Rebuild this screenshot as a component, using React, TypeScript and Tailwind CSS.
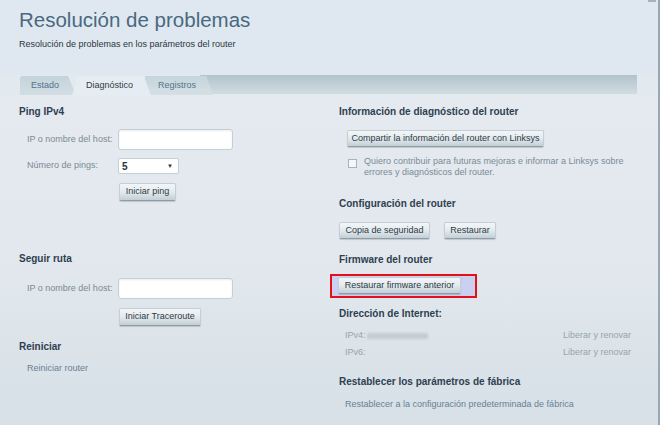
import React from "react";

const font = { fontFamily: '"Liberation Sans", Arial, sans-serif' };

function Btn({ children, className = "" }: { children: React.ReactNode; className?: string }) {
  return (
    <div
      className={
        "flex items-center justify-center rounded-[2px] border border-[#c4ced4] border-b-[#8d9ca6] bg-gradient-to-b from-[#f3f6f8] via-[#e3eaee] to-[#c3cfd6] text-[9px] text-[#2e3a44] shadow-[0_1px_1px_rgba(0,0,0,0.15)] " +
        className
      }
    >
      {children}
    </div>
  );
}

function SectionTitle({ children }: { children: React.ReactNode }) {
  return <div className="h-[14px] text-[10px] leading-[14px] font-bold text-[#2f3f50]">{children}</div>;
}

function Input({ className = "" }: { className?: string }) {
  return (
    <div
      className={
        "rounded-[3px] border border-[#c3ced6] bg-white shadow-[inset_0_1px_2px_rgba(0,0,0,0.08)] " + className
      }
    />
  );
}

export default function App() {
  return (
    <div style={font} className="relative h-[425px] w-[660px] overflow-hidden bg-[#e3e9ef]">
      {/* right border line */}
      <div className="absolute right-0 top-0 h-full w-[2px] bg-[#9aa6b0]" />
      <div className="absolute right-[4px] top-0 h-[2px] w-[8px] bg-[#a8b2ba]" />

      {/* header */}
      <div className="h-[75px] w-[658px] bg-[#dfe8f0] pl-[19px] pt-[7px]">
        <div className="text-[20.5px] leading-[26px] text-[#4a687f]">Resolución de problemas</div>
        <div className="mt-[5px] text-[9px] leading-[12px] text-[#2c3640]">
          Resolución de problemas en los parámetros del router
        </div>
      </div>

      {/* tab bar */}
      <div className="relative flex h-[20px] w-[658px] bg-[#e2e9ef]">
        <div className="absolute left-[200px] top-0 h-[19px] w-[437px] bg-gradient-to-b from-[#b1c3cb] to-[#d1dde2]" />
        <div className="absolute left-[20px] top-[1px] flex h-[19px] w-[56px] items-center rounded-tl-[3px] bg-gradient-to-b from-[#c4d3db] to-[#d2dee4] pl-[11px] text-[9px] text-[#55748b] [clip-path:polygon(0_0,86%_0,100%_100%,0_100%)]">
          Estado
        </div>
        <div className="absolute left-[145px] top-[1px] flex h-[19px] w-[68px] items-center bg-gradient-to-b from-[#c6d5dc] to-[#d4e0e5] pl-[13px] text-[9px] text-[#55748b] [clip-path:polygon(0_0,90%_0,100%_100%,0_100%)]">
          Registros
        </div>
        <div className="absolute left-[72px] top-[1px] flex h-[20px] w-[79px] items-center bg-[#e6edf2] pl-[14px] text-[9px] text-[#333b44] [clip-path:polygon(7%_0,91%_0,100%_100%,0_100%)]">
          Diagnóstico
        </div>
      </div>

      {/* content */}
      <div className="flex h-[330px] w-[658px] bg-gradient-to-b from-[#e4eaf0] via-[#e2e8ee] to-[#d6e0e6]">
        {/* left column */}
        <div className="w-[320px] pl-[19px] pt-[10px]">
          <SectionTitle>Ping IPv4</SectionTitle>
          <div className="mt-[10px] flex h-[21px] items-center pl-[8px]">
            <div className="w-[91px] text-[9px] text-[#7c8995]">IP o nombre del host:</div>
            <Input className="h-[21px] w-[115px]" />
          </div>
          <div className="mt-[8px] flex h-[16px] items-center pl-[8px]">
            <div className="w-[91px] text-[9px] text-[#7c8995]">Número de pings:</div>
            <div className="flex h-[16px] w-[61px] items-center justify-between rounded-[2px] border border-[#c3ced6] bg-white pl-[3px] pr-[5px]">
              <span className="text-[10px] font-bold text-[#2a323a]">5</span>
              <span className="text-[6px] text-[#333]">▼</span>
            </div>
          </div>
          <div className="mt-[9px] pl-[100px]">
            <Btn className="h-[18px] w-[57px]">Iniciar ping</Btn>
          </div>

          <div className="mt-[51px]">
            <SectionTitle>Seguir ruta</SectionTitle>
          </div>
          <div className="mt-[12px] flex h-[21px] items-center pl-[8px]">
            <div className="w-[91px] text-[9px] text-[#7c8995]">IP o nombre del host:</div>
            <Input className="h-[21px] w-[115px]" />
          </div>
          <div className="mt-[9px] pl-[100px]">
            <Btn className="h-[18px] w-[82px]">Iniciar Traceroute</Btn>
          </div>

          <div className="mt-[14px]">
            <SectionTitle>Reiniciar</SectionTitle>
          </div>
          <div className="mt-[8px] pl-[8px] text-[9px] leading-[12px] text-[#6a8094]">Reiniciar router</div>
        </div>

        {/* right column */}
        <div className="w-[319px] pl-[19px] pt-[10px]">
          <SectionTitle>Información de diagnóstico del router</SectionTitle>
          <div className="mt-[11px] pl-[8px]">
            <Btn className="h-[17px] w-[197px]">Compartir la información del router con Linksys</Btn>
          </div>
          <div className="mt-[9px] flex pl-[9px]">
            <div className="mt-[3px] h-[9px] w-[9px] shrink-0 border border-[#a8b4bc] bg-[#f4f7f9]" />
            <div className="ml-[7px] w-[260px] text-[9px] leading-[11px] text-[#7c8995]">
              Quiero contribuir para futuras mejoras e informar a Linksys sobre errores y diagnósticos del router.
            </div>
          </div>

          <div className="mt-[19px]">
            <SectionTitle>Configuración del router</SectionTitle>
          </div>
          <div className="mt-[11px] flex gap-[14px]">
            <Btn className="h-[17px] w-[91px]">Copia de seguridad</Btn>
            <Btn className="h-[17px] w-[52px]">Restaurar</Btn>
          </div>

          <div className="mt-[14px]">
            <SectionTitle>Firmware del router</SectionTitle>
          </div>
          <div className="ml-[-9px] mt-[7px] h-[24px] w-[147px] border-2 border-[#e3111a] bg-[#c9d0f0] pl-[6px] pt-[1px]">
            <Btn className="h-[17px] w-[123px]">Restaurar firmware anterior</Btn>
          </div>

          <div className="mt-[9px]">
            <SectionTitle>Dirección de Internet:</SectionTitle>
          </div>
          <div className="mt-[9px] flex h-[12px] items-center justify-between pl-[6px] pr-[8px] text-[9px] text-[#98a3ad]">
            <div className="flex items-center">
              <span>IPv4:</span>
              <span className="ml-[1px] h-[6px] w-[61px] rounded-[2px] bg-[#c4ccd4] blur-[1px]" />
            </div>
            <span>Liberar y renovar</span>
          </div>
          <div className="mt-[5px] flex h-[12px] items-center justify-between pl-[6px] pr-[8px] text-[9px] text-[#98a3ad]">
            <span>IPv6:</span>
            <span>Liberar y renovar</span>
          </div>

          <div className="mt-[16px]">
            <SectionTitle>Restablecer los parámetros de fábrica</SectionTitle>
          </div>
          <div className="mt-[9px] pl-[6px] text-[9px] leading-[12px] text-[#6a8094]">
            Restablecer a la configuración predeterminada de fábrica
          </div>
        </div>
      </div>
    </div>
  );
}
